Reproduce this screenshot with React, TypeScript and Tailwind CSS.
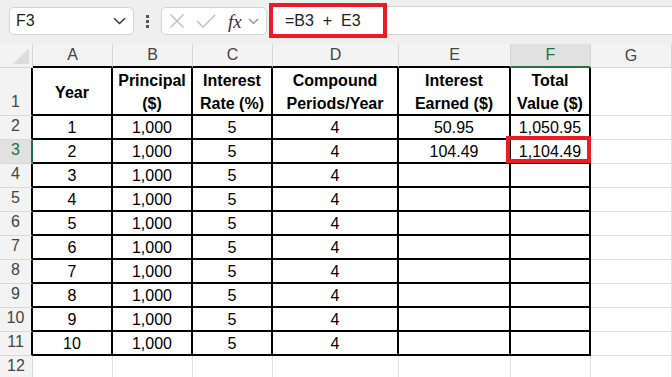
import React from 'react';

const COLS = ['A', 'B', 'C', 'D', 'E', 'F', 'G'];

// widths per column (row header first), written out in full
const W = ['w-[33px]', 'w-[80px]', 'w-[80px]', 'w-[80px]', 'w-[126px]', 'w-[112px]', 'w-[80px]', 'w-[81px]'];

const HEADERS = ['Year', 'Principal ($)', 'Interest Rate (%)', 'Compound Periods/Year', 'Interest Earned ($)', 'Total Value ($)'];

const ROWS: string[][] = [
  ['1', '1,000', '5', '4', '50.95', '1,050.95'],
  ['2', '1,000', '5', '4', '104.49', '1,104.49'],
  ['3', '1,000', '5', '4', '', ''],
  ['4', '1,000', '5', '4', '', ''],
  ['5', '1,000', '5', '4', '', ''],
  ['6', '1,000', '5', '4', '', ''],
  ['7', '1,000', '5', '4', '', ''],
  ['8', '1,000', '5', '4', '', ''],
  ['9', '1,000', '5', '4', '', ''],
  ['10', '1,000', '5', '4', '', ''],
];

function RowHead({ n, h }: { n: number; h: string }) {
  const selected = n === 3;
  const inTable = n <= 11;
  return (
    <div
      className={`${W[0]} ${h} shrink-0 flex items-end justify-center pb-[1px] text-[16px] border-b border-b-[#d9d9d9] ${
        selected
          ? 'bg-[#e1e1e1] text-[#1e7145] border-r-2 border-r-[#217346]'
          : inTable
          ? 'bg-[#f3f3f3] text-[#444] border-r-2 border-r-black'
          : 'bg-[#f3f3f3] text-[#444] border-r border-r-[#d9d9d9]'
      }`}
    >
      {n}
    </div>
  );
}

export default function App() {
  return (
    <div className="w-[672px] h-[377px] overflow-hidden bg-white font-['Liberation_Sans',Arial,sans-serif] text-black">
      {/* toolbar */}
      <div className="h-[44px] bg-[#efefef] flex items-start pt-[7px]">
        <div className="ml-[9px] w-[125px] h-[28px] bg-white border border-[#d4d4d4] rounded-[5px] flex items-center pl-[6px] pr-[7px] text-[16px] text-[#222]">
          <span className="flex-1">F3</span>
          <svg width="13" height="8" viewBox="0 0 13 8" fill="none" stroke="#333" strokeWidth="1.4">
            <path d="M1 1.2 L6.5 6.5 L12 1.2" />
          </svg>
        </div>
        <div className="w-[27px] h-[28px] flex flex-col items-center justify-center gap-[2px]">
          <span className="w-[2.5px] h-[3px] bg-[#555]" />
          <span className="w-[2.5px] h-[3px] bg-[#555]" />
          <span className="w-[2.5px] h-[3px] bg-[#555]" />
        </div>
        <div className="w-[106px] h-[28px] bg-white border border-[#d4d4d4] rounded-[5px] flex items-center pl-[7px]">
          <svg width="16" height="16" viewBox="0 0 16 16" fill="none" stroke="#bdbdbd" strokeWidth="1.3">
            <path d="M1.5 1.5 L14.5 14.5 M14.5 1.5 L1.5 14.5" />
          </svg>
          <svg className="ml-[11px]" width="20" height="14" viewBox="0 0 20 14" fill="none" stroke="#bdbdbd" strokeWidth="1.3">
            <path d="M1 7 L7 13 L19 1" />
          </svg>
          <span className="ml-[12px] font-['Liberation_Serif',serif] italic text-[19px] leading-none text-[#333]">fx</span>
          <svg className="ml-[6px]" width="11" height="7" viewBox="0 0 11 7" fill="none" stroke="#888" strokeWidth="1.2">
            <path d="M1 1 L5.5 5.5 L10 1" />
          </svg>
        </div>
        <div className="relative ml-[2px] flex-1 h-[29px] mt-[-1px] bg-white border-y border-[#d4d4d4] flex items-center pl-[16px] text-[16px] text-[#222] whitespace-pre">
          =B3  +  E3
          <div className="absolute left-0 top-[-4px] w-[118px] h-[35px] border-4 border-[#ed1c24]" />
        </div>
      </div>

      {/* column headers */}
      <div className="flex h-[24px]">
        <div className={`${W[0]} shrink-0 h-[24px] bg-[#f3f3f3] border-r border-r-[#d6d6d6] border-b border-b-[#d6d6d6] relative`}>
          <svg className="absolute left-[13px] top-[4px]" width="16" height="16" viewBox="0 0 16 16">
            <path d="M16 0 L16 16 L0 16 Z" fill="#dcdcdc" />
          </svg>
        </div>
        {COLS.map((c, i) => (
          <div
            key={c}
            className={`${W[i + 1]} shrink-0 h-[24px] flex items-center justify-center text-[16px] border-r border-r-[#d6d6d6] ${
              c === 'F'
                ? 'bg-[#e1e1e1] text-[#1e7145] border-b-2 border-b-[#217346]'
                : c === 'G'
                ? 'bg-[#f3f3f3] text-[#444] border-b border-b-[#d6d6d6]'
                : 'bg-[#f3f3f3] text-[#444] border-b-2 border-b-black'
            }`}
          >
            {c}
          </div>
        ))}
      </div>

      {/* row 1: headers */}
      <div className="flex h-[48px]">
        <RowHead n={1} h="h-[48px]" />
        {HEADERS.map((t, i) => (
          <div
            key={t}
            className={`${W[i + 1]} shrink-0 h-[48px] flex items-center justify-center text-center font-bold text-[16px] leading-[23px] pt-[2px] border-r-2 border-b-2 border-black`}
          >
            {t === 'Principal ($)' ? (
              <span>Principal<br />($)</span>
            ) : t === 'Interest Rate (%)' ? (
              <span>Interest<br />Rate (%)</span>
            ) : t === 'Compound Periods/Year' ? (
              <span>Compound<br />Periods/Year</span>
            ) : t === 'Interest Earned ($)' ? (
              <span>Interest<br />Earned ($)</span>
            ) : t === 'Total Value ($)' ? (
              <span>Total<br />Value ($)</span>
            ) : (
              <span>{t}</span>
            )}
          </div>
        ))}
        <div className={`${W[7]} shrink-0 h-[48px] border-r border-b border-[#e1e1e1]`} />
      </div>

      {/* data rows */}
      {ROWS.map((r, ri) => (
        <div key={ri} className="flex h-[24px]">
          <RowHead n={ri + 2} h="h-[24px]" />
          {r.map((v, ci) => (
            <div
              key={ci}
              className={`${W[ci + 1]} shrink-0 h-[24px] relative flex items-center justify-center text-[16px] pt-[1px] border-r-2 border-b-2 border-black`}
            >
              {v}
              {ri === 1 && ci === 5 && (
                <div className="absolute left-[-5px] right-[-2px] top-[-4px] bottom-[-1px] border-4 border-[#ed1c24]" />
              )}
            </div>
          ))}
          <div className={`${W[7]} shrink-0 h-[24px] border-r border-b border-[#e1e1e1]`} />
        </div>
      ))}

      {/* row 12 */}
      <div className="flex h-[24px]">
        <RowHead n={12} h="h-[24px]" />
        {COLS.map((c, i) => (
          <div key={c} className={`${W[i + 1]} shrink-0 h-[24px] border-r border-b border-[#e1e1e1]`} />
        ))}
      </div>
    </div>
  );
}
